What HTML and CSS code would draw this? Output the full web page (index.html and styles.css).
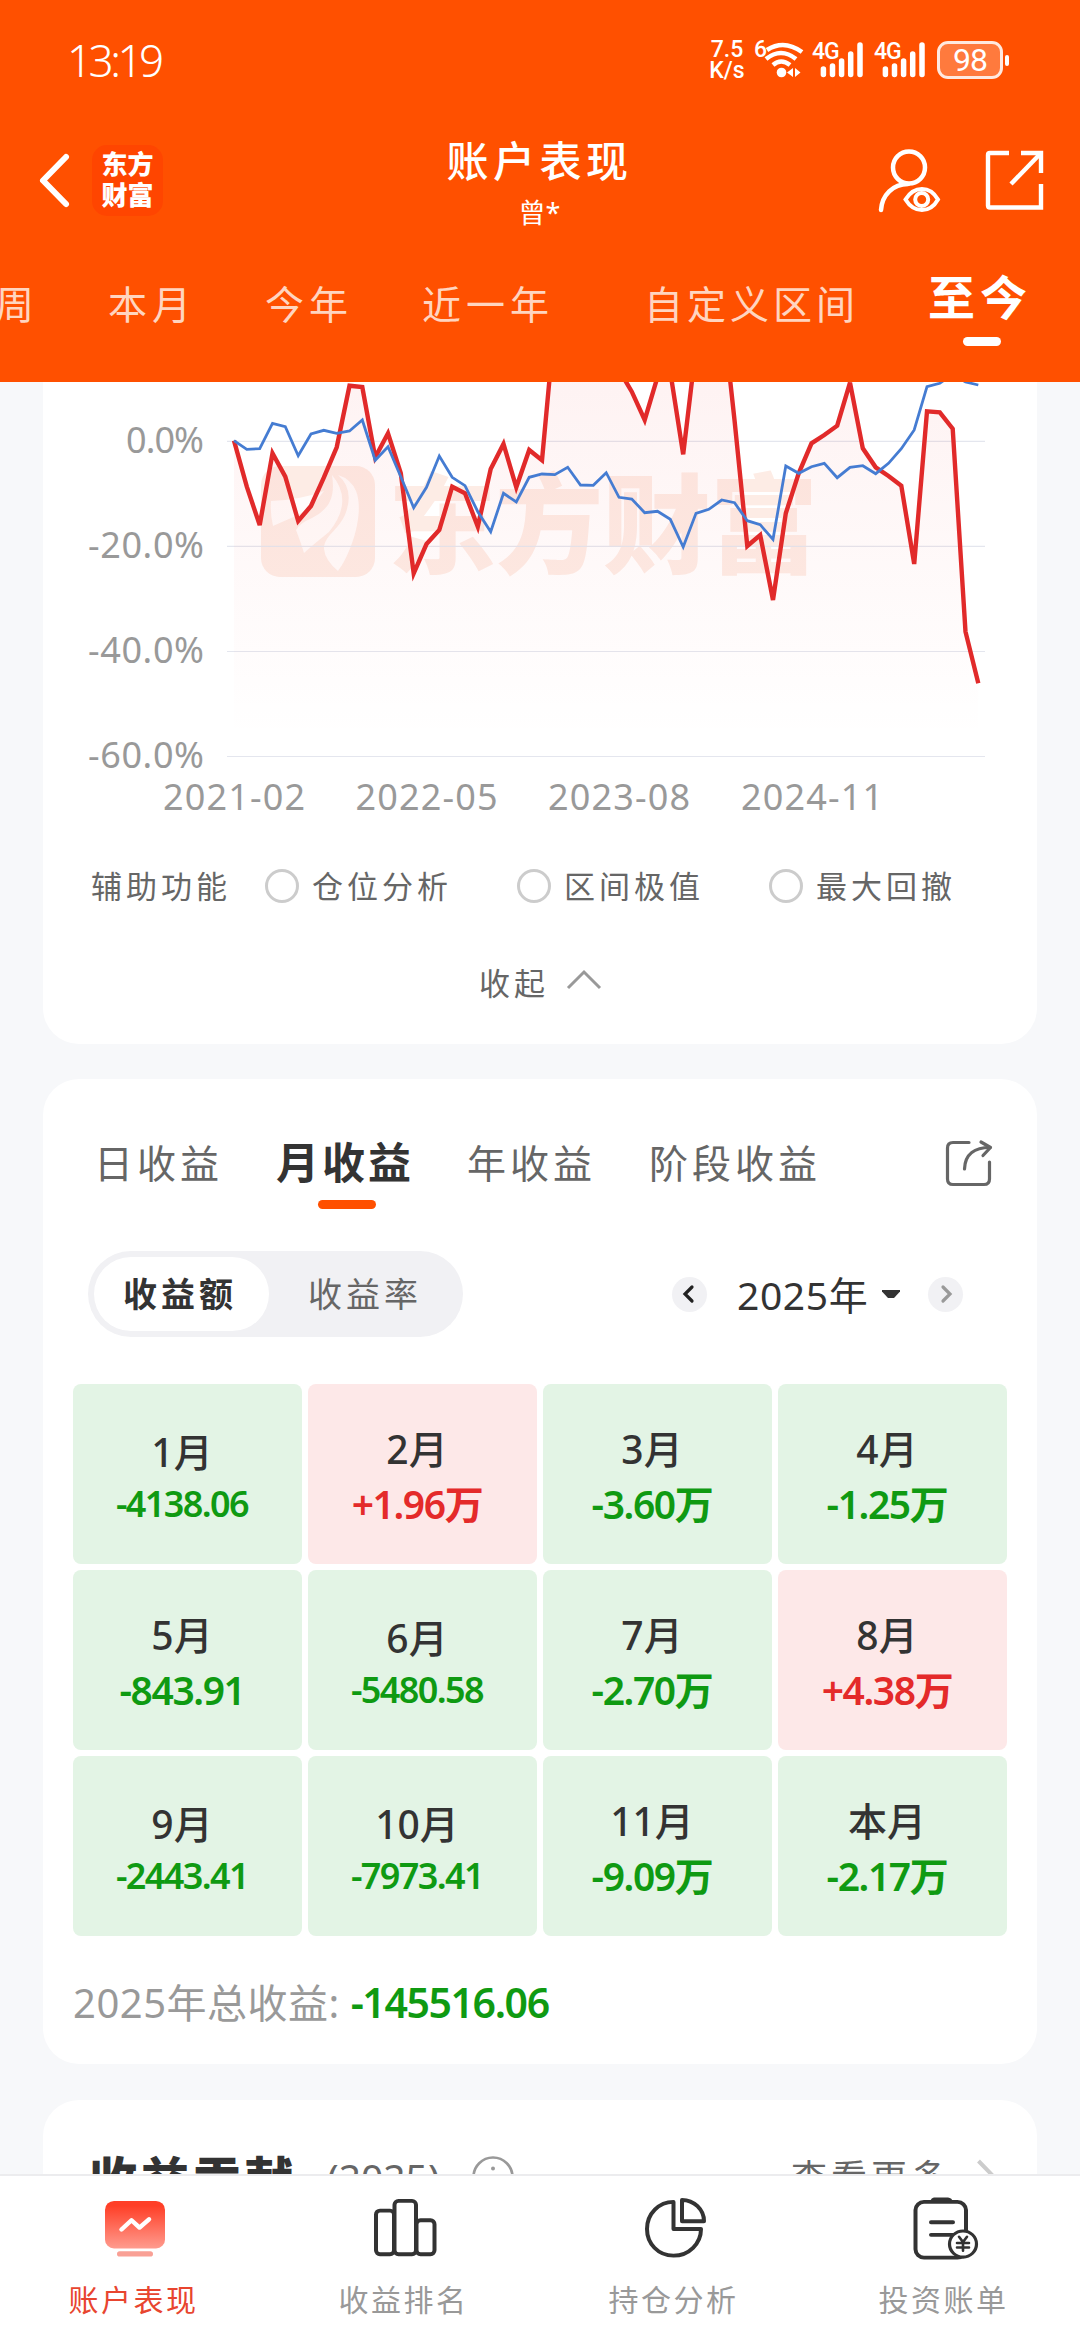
FILE: index.html
```html
<!DOCTYPE html>
<html lang="zh-CN">
<head>
  <meta charset="UTF-8" />
  <meta name="viewport" content="width=device-width, initial-scale=1.0" />
  <title>账户表现</title>
  <link rel="stylesheet" href="styles.css">
</head>
<body>

<header>
  <div class="status">
    <span class="time">13:19</span>
    <span class="speed"><span>7.5</span><span>K/s</span></span>
    <svg class="wifi" width="50" height="40" viewBox="753 42 50 40">
      <text x="753" y="59" class="net">6</text>
      <g fill="none" stroke="#fff" stroke-width="4.5">
        <path d="M766 52 Q783 41 801 54" />
        <path d="M765 61 Q780 49 795 61" />
        <path d="M772 67 Q780 60 789 67" />
      </g>
      <circle cx="780.500" cy="74.500" r="4.800" fill="#fff" />
      <path d="M786 74.500 L792 70 V79 Z M799.500 74.500 L794 70 V79 Z" fill="#fff" />
    </svg>
    <svg class="signal" width="54" height="40" viewBox="811 42 54 40">
      <text x="811" y="61" class="net">4G</text>
      <path d="M822.400 71 V76.500 M831.500 68 V76.500 M840.600 63 V76.500 M849.700 56 V76.500 M859 47 V76.500" stroke="#fff" stroke-width="5.500" stroke-linecap="round" />
    </svg>
    <svg class="signal" width="54" height="40" viewBox="811 42 54 40">
      <text x="811" y="61" class="net">4G</text>
      <path d="M822.400 71 V76.500 M831.500 68 V76.500 M840.600 63 V76.500 M849.700 56 V76.500 M859 47 V76.500" stroke="#fff" stroke-width="5.500" stroke-linecap="round" />
    </svg>
    <span class="battery">98</span>
    <span class="battery-tip"></span>
  </div>

  <div class="titlebar">
    <svg class="back" width="30" height="54" viewBox="0 0 30 54"><path d="M26 4 L3 27.500 L26 51" fill="none" stroke="#fff" stroke-width="6" stroke-linecap="round" stroke-linejoin="round" /></svg>
    <div class="brand">东方<br>财富</div>
    <div class="title">
      <h1>账户表现</h1>
      <p>曾*</p>
    </div>
    <svg class="user" width="64" height="66" viewBox="878 152 64 66" fill="none" stroke="#fff" stroke-width="4.500">
      <circle cx="909" cy="172.500" r="16" />
      <path d="M908 189 C893 189 882 200 881 215" stroke-linecap="round" />
      <path d="M905.500 204.500 C914 190.500 930 190.500 938 204.500 C930 218.500 914 218.500 905.500 204.500 Z" stroke-width="4" />
      <circle cx="921.700" cy="204.500" r="6.500" stroke-width="4" />
    </svg>
    <svg class="open" width="58" height="62" viewBox="986 155 58 62" fill="none" stroke="#fff" stroke-width="4.400">
      <path d="M1010 159 H991 Q989 159 989 161 V211.500 Q989 213.500 991 213.500 H1042 V190" />
      <path d="M1022 159 H1042 V179" />
      <path d="M1042 159 L1012 190" />
    </svg>
  </div>

  <nav class="ranges">
    <span>周</span>
    <span>本月</span>
    <span>今年</span>
    <span>近一年</span>
    <span class="custom">自定义区间</span>
    <span class="active">至今</span>
  </nav>
</header>

<main>
  <section class="card chart-card">
    <svg class="chart" width="994" height="450" viewBox="43 382 994 450">
      <defs>
        <linearGradient id="area" gradientUnits="userSpaceOnUse" x1="0" y1="300" x2="0" y2="740">
          <stop offset="0" stop-color="#f02828" stop-opacity="0.07" />
          <stop offset="1" stop-color="#f02828" stop-opacity="0" />
        </linearGradient>
      </defs>

      <!-- watermark -->
      <g fill="#fdece5">
        <rect x="261" y="466" width="114" height="111" rx="19" />
        <text class="watermark" x="388" y="565" textLength="430">东方财富</text>
      </g>
      <g fill="#fffcfb">
        <path d="M271 501 Q300 500 324 491 Q312 508 296 516 Q284 521 273 526 Q270 513 271 501 Z" />
        <path d="M332 475 C336 500 327 510 312 518 Q300 523 296 530 Q301 543 304 553 Q315 543 329 532 Q354 501 332 475 Z" />
        <path d="M338 475 Q353 488 347 509 C342 529 324 534 324 549 Q325 560 338 571 C351 554 365 513 356 491 Q351 479 338 475 Z" />
      </g>

      <g stroke="#e4e6ee" stroke-width="1.200">
        <path d="M227 441.400 H985 M227 546.400 H985 M227 651.500 H985 M227 756.500 H985" />
      </g>

      <path fill="url(#area)" d="M234 756 L234 440.700 L246.800 486.700 L259.700 525 L272.500 453.300 L285.300 476.700 L298.200 521 L311 506 L323.800 477.700 L336.700 447.300 L349.500 385.700 L362.300 387 L375.200 457.300 L388 433.300 L400.800 473.300 L413.700 573.300 L426.500 544 L439.300 530 L452.200 486.700 L465 493.300 L477.800 526.700 L490.700 469 L503.500 444 L516.300 487.300 L529.200 450 L542 460.300 L554.800 322 L606.200 330 L619 370 L631.800 391.700 L644.700 420 L657.500 377 L670.300 372 L683.200 454.300 L696 347 L721.700 303 L734.500 420 L747.300 546 L760.200 535 L773 600 L785.800 513.300 L798.700 473.300 L811.500 443.300 L824.300 435 L837.200 425.700 L850 382.700 L862.800 448.300 L875.700 467.300 L888.500 476 L901.300 485.700 L914.200 564 L927 411.300 L939.800 412.300 L952.700 428.700 L965.500 631.700 L978.300 683.300 L978.300 756 Z" />

      <polyline class="mine" points="234,440.700 246.800,486.700 259.700,525 272.500,453.300 285.300,476.700 298.200,521 311,506 323.800,477.700 336.700,447.300 349.500,385.700 362.300,387 375.200,457.300 388,433.300 400.800,473.300 413.700,573.300 426.500,544 439.300,530 452.200,486.700 465,493.300 477.800,526.700 490.700,469 503.500,444 516.300,487.300 529.200,450 542,460.300 554.800,322 567.700,300 606.200,330 619,370 631.800,391.700 644.700,420 657.500,377 670.300,372 683.200,454.300 696,347 708.800,310 721.700,303 734.500,420 747.300,546 760.200,535 773,600 785.800,513.300 798.700,473.300 811.500,443.300 824.300,435 837.200,425.700 850,382.700 862.800,448.300 875.700,467.300 888.500,476 901.300,485.700 914.200,564 927,411.300 939.800,412.300 952.700,428.700 965.500,631.700 978.300,683.300" />

      <polyline class="index" points="234,440.700 246.800,449.300 259.700,448.700 272.500,423.300 285.300,426.700 298.200,455.700 311,434 323.800,430.300 336.700,433.300 349.500,431 362.300,420 375.200,460.300 388,446.700 400.800,476.700 413.700,507.700 426.500,487.300 439.300,456 452.200,477.300 465,485.700 477.800,511.700 490.700,531.700 503.500,493.300 516.300,502 529.200,477.300 542,474 554.800,474.700 567.700,467.300 580.500,485 593.300,485.300 606.200,472.700 619,497.300 631.800,499 644.700,512.700 657.500,511.300 670.300,519.300 683.200,547 696,513.300 708.800,509.300 721.700,500 734.500,502.700 747.300,520.700 760.200,524.700 773,539.300 785.800,466 798.700,473.300 811.500,466.700 824.300,463.300 837.200,477.700 850,467.300 862.800,465.700 875.700,473.700 888.500,463.300 901.300,448.700 914.200,430 927,386.700 939.800,383.300 952.700,374 965.500,382 978.300,385" />

      <g class="axis">
        <text x="126" y="453" textLength="78">0.0%</text>
        <text x="88" y="558" textLength="116">-20.0%</text>
        <text x="88" y="663" textLength="116">-40.0%</text>
        <text x="88" y="768" textLength="116">-60.0%</text>
        <text x="163" y="810" textLength="142">2021-02</text>
        <text x="355.500" y="810" textLength="142">2022-05</text>
        <text x="548" y="810" textLength="142">2023-08</text>
        <text x="741" y="810" textLength="142">2024-11</text>
      </g>
    </svg>

    <div class="helpers">
      <span class="label">辅助功能</span>
      <span class="radio"><i></i>仓位分析</span>
      <span class="radio"><i></i>区间极值</span>
      <span class="radio"><i></i>最大回撤</span>
    </div>

    <div class="collapse">
      收起
      <svg width="36" height="22" viewBox="0 0 36 22"><path d="M2 19 L18 3 L34 19" fill="none" stroke="#999" stroke-width="3" /></svg>
    </div>
  </section>

  <section class="card profit-card">
    <div class="tabs">
      <span>日收益</span>
      <span class="active">月收益</span>
      <span>年收益</span>
      <span>阶段收益</span>
      <svg width="48" height="48" viewBox="945 1138 48 48" fill="none" stroke="#666" stroke-width="3.200" stroke-linecap="round" stroke-linejoin="round">
        <path d="M969 1141.500 H953 Q947.500 1141.500 947.500 1147 V1178 Q947.500 1183.500 953 1183.500 H984 Q989.500 1183.500 989.500 1178 V1161" />
        <path d="M964.500 1168 C965 1153 975 1146.500 990 1146.500" />
        <path d="M981 1141 L990.500 1146.500 L983 1154.500" />
      </svg>
    </div>

    <div class="filters">
      <div class="switch">
        <span class="on">收益额</span>
        <span>收益率</span>
      </div>
      <div class="year">
        <span class="arrow"><svg width="35" height="35" viewBox="0 0 35 35"><path d="M20 10 L13 17 L20 24" fill="none" stroke="#222" stroke-width="3.200" stroke-linecap="round" /></svg></span>
        <span class="year-text">2025年</span>
        <svg class="caret" width="18" height="8" viewBox="0 0 18 8"><path d="M0 0 H18 V1.500 L12 8 H6 L0 1.500 Z" fill="#333" /></svg>
        <span class="arrow"><svg width="35" height="35" viewBox="0 0 35 35"><path d="M15 10 L22 17 L15 24" fill="none" stroke="#999" stroke-width="3.200" stroke-linecap="round" /></svg></span>
      </div>
    </div>

    <div class="months">
      <div class="month small"><b>1月</b><em>-4138.06</em></div>
      <div class="month up"><b>2月</b><em>+1.96万</em></div>
      <div class="month"><b>3月</b><em>-3.60万</em></div>
      <div class="month"><b>4月</b><em>-1.25万</em></div>
      <div class="month"><b>5月</b><em>-843.91</em></div>
      <div class="month small"><b>6月</b><em>-5480.58</em></div>
      <div class="month"><b>7月</b><em>-2.70万</em></div>
      <div class="month up"><b>8月</b><em>+4.38万</em></div>
      <div class="month small"><b>9月</b><em>-2443.41</em></div>
      <div class="month small"><b>10月</b><em>-7973.41</em></div>
      <div class="month"><b>11月</b><em>-9.09万</em></div>
      <div class="month"><b>本月</b><em>-2.17万</em></div>
    </div>

    <p class="total">2025年总收益: <strong>-145516.06</strong></p>
  </section>

  <section class="card contribution">
    <h2>收益贡献</h2>
    <span class="sub">(2025)</span>
    <svg width="42" height="42" viewBox="0 0 42 42"><circle cx="21" cy="21" r="19.500" fill="none" stroke="#999" stroke-width="2.600" /><circle cx="21" cy="12.500" r="2" fill="#999" /><path d="M21 18 V31" stroke="#999" stroke-width="3" /></svg>
    <span class="more">查看更多</span>
    <svg class="chev" width="20" height="38" viewBox="0 0 20 38"><path d="M1.500 2 L18 19 L1.500 36" fill="none" stroke="#ccc" stroke-width="4" /></svg>
  </section>
</main>

<footer>
  <div class="item active">
    <svg width="64" height="62" viewBox="0 0 64 64" preserveAspectRatio="none">
      <defs>
        <linearGradient id="red" x1="0" y1="0" x2="0" y2="1">
          <stop offset="0.100" stop-color="#ff3f27" />
          <stop offset="1" stop-color="#ff9b8e" />
        </linearGradient>
      </defs>
      <rect x="2" y="3" width="60" height="49" rx="9" fill="url(#red)" />
      <rect x="14" y="55" width="36" height="5.500" rx="2.700" fill="#f9a095" />
      <path d="M18.500 32.500 L28.500 23 L36.500 30.500 L46 22" fill="none" stroke="#fff" stroke-width="4.500" stroke-linecap="round" stroke-linejoin="round" />
    </svg>
    <span>账户表现</span>
  </div>
  <div class="item">
    <svg width="64" height="62" viewBox="0 0 64 64" preserveAspectRatio="none" fill="none" stroke="#333" stroke-width="4">
      <rect x="3" y="13" width="18" height="45" rx="4" />
      <rect x="21.500" y="3" width="21.500" height="55" rx="4" />
      <rect x="43.500" y="23" width="18" height="35" rx="4" />
    </svg>
    <span>收益排名</span>
  </div>
  <div class="item">
    <svg width="64" height="62" viewBox="0 0 64 64" preserveAspectRatio="none" fill="none" stroke="#333" stroke-width="4" stroke-linejoin="round">
      <path d="M30.500 4 V32 H58 C58 47 46 59.500 30.500 59.500 C15 59.500 4 47 4 32 C4 16 16 4 30.500 4 Z" />
      <path d="M39 2 V24 H61 C61 12 51 2 39 2 Z" />
    </svg>
    <span>持仓分析</span>
  </div>
  <div class="item">
    <svg width="64" height="62" viewBox="0 0 64 64" preserveAspectRatio="none" fill="none" stroke="#333" stroke-width="4" stroke-linecap="round">
      <rect x="2.500" y="4" width="50.500" height="57.500" rx="8.500" />
      <path d="M17 4 Q18 0 21 -0.500 H35 Q39 0 40 4 Z" fill="#333" stroke="none" />
      <path d="M18 25 H40 M18 38 H40" />
      <circle cx="50" cy="47.500" r="13.500" fill="#fff" stroke-width="3.200" />
      <path d="M46 40 L50 45.500 L54 40 M50 45.500 V54.500 M44 46.500 H56 M44 51 H56" stroke-width="2.600" />
    </svg>
    <span>投资账单</span>
  </div>
</footer>

</body>
</html>
```
FILE: styles.css
```css
* {
  box-sizing: border-box;
}

body {
  margin: 0;
  width: 1080px;
  height: 2340px;
  overflow: hidden;
  display: flex;
  flex-direction: column;
  background: #f7f8fa;
  color: #333;
  font-family: "Noto Sans", "Noto Sans CJK SC", sans-serif;
  line-height: 1;
}

h1, h2, p {
  margin: 0;
}

svg {
  display: block;
  flex: none;
  overflow: visible;
}

/* header */
header {
  flex: none;
  height: 382px;
  background: #ff5000;
  color: #fff;
  overflow: hidden;
}

.status {
  height: 115px;
  padding: 40px 71px 35px 67px;
  display: flex;
  align-items: center;
}

.time {
  flex: 1;
  font-size: 44px;
  font-weight: 300;
  letter-spacing: -3.500px;
}

.speed {
  width: 38px;
  margin-right: 8px;
  display: flex;
  flex-direction: column;
  align-items: center;
  font: 500 23px/21px Roboto, sans-serif;
}

.net {
  font: 500 23px Roboto, sans-serif;
  letter-spacing: -1px;
  fill: #fff;
}

.wifi {
  margin-right: 8px;
}

.signal {
  margin-right: 8px;
}

.battery {
  width: 66px;
  height: 38px;
  margin-left: 1px;
  border: 3px solid #ffe9df;
  border-radius: 11px;
  background: #ff7a3d;
  font: 400 32px/33px Roboto, sans-serif;
  text-align: center;
  letter-spacing: -1px;
}

.battery-tip {
  width: 4px;
  height: 11px;
  margin-left: 2px;
  border-radius: 2px;
  background: #fff;
}

.titlebar {
  height: 130px;
  padding: 0 37px 0 40px;
  display: flex;
  align-items: center;
}

.brand {
  width: 71px;
  height: 71px;
  margin-left: 22px;
  padding-top: 4px;
  border-radius: 15px;
  background: #ff4500;
  font-size: 26px;
  font-weight: 900;
  line-height: 31px;
  text-align: center;
}

.title {
  flex: 1;
  padding: 6px 0 0 38px;
  text-align: center;
}

.title h1 {
  font-size: 42px;
  font-weight: 500;
  line-height: 46px;
  letter-spacing: 4.500px;
}

.title p {
  margin-top: 13px;
  font-size: 27px;
  line-height: 32px;
}

.user {
  margin-right: 43px;
}

.ranges {
  height: 130px;
  margin-left: -5px;
  padding-top: 39px;
  display: flex;
  gap: 69px;
  align-items: flex-start;
  font-size: 39px;
  line-height: 40px;
  letter-spacing: 5px;
  color: #ffd5c0;
  white-space: nowrap;
}

.ranges .custom {
  margin-left: 21px;
  letter-spacing: 4px;
}

.ranges .active {
  margin: -11px 0 0 0;
  font-size: 47px;
  font-weight: 700;
  line-height: 48px;
  color: #fff;
}

.ranges .active::after {
  content: "";
  display: block;
  width: 38px;
  height: 9px;
  margin: 16px 0 0 35px;
  border-radius: 5px;
  background: #fff;
}

/* content */
main {
  flex: 1;
  min-height: 0;
  padding: 0 43px;
  overflow: hidden;
}

.card {
  background: #fff;
  border-radius: 36px;
}

.chart-card {
  height: 662px;
  border-radius: 0 0 36px 36px;
}

.chart {
  overflow: hidden;
}

.watermark {
  font: 900 108px "Noto Sans CJK SC", sans-serif;
}

.mine {
  fill: none;
  stroke: #e12a2a;
  stroke-width: 4.400;
}

.index {
  fill: none;
  stroke: #457cd2;
  stroke-width: 2.800;
}

.axis {
  font-size: 36px;
  fill: #999;
}

.helpers {
  height: 108px;
  padding-left: 48px;
  display: flex;
  align-items: center;
  font-size: 31px;
  letter-spacing: 4px;
  color: #666;
}

.helpers .label {
  width: 174px;
}

.radio {
  width: 252px;
  display: flex;
  align-items: center;
}

.radio i {
  width: 34px;
  height: 34px;
  margin-right: 13px;
  border: 3px solid #ccc;
  border-radius: 50%;
}

.collapse {
  height: 86px;
  padding-left: 1px;
  display: flex;
  justify-content: center;
  align-items: center;
  gap: 17px;
  font-size: 31px;
  letter-spacing: 4px;
  color: #666;
}

.collapse svg {
  margin-top: -7px;
}

.profit-card {
  height: 985px;
  margin-top: 35px;
  padding: 0 30px;
}

.tabs {
  height: 172px;
  padding: 60px 14px 0 21px;
  display: flex;
  align-items: flex-start;
  font-size: 39px;
  line-height: 48px;
  letter-spacing: 4px;
  color: #666;
}

.tabs span {
  margin-right: 53px;
}

.tabs .active {
  font-size: 43px;
  font-weight: 700;
  letter-spacing: 3px;
  color: #333;
}

.tabs .active::after {
  content: "";
  display: block;
  width: 58px;
  height: 9px;
  margin: 13px 0 0 42px;
  border-radius: 5px;
  background: #ff5000;
}

.tabs svg {
  margin-left: auto;
}

.filters {
  padding: 0 44px 0 15px;
  display: flex;
  justify-content: space-between;
}

.switch {
  width: 375px;
  height: 86px;
  padding: 6px;
  display: flex;
  border-radius: 43px;
  background: #f1f1f4;
  font-size: 34px;
  line-height: 75px;
  letter-spacing: 4px;
  color: #666;
}

.switch span {
  width: 184px;
  text-align: center;
}

.switch .on {
  width: 175px;
  margin-right: 4px;
  padding-right: 3px;
  border-radius: 37px;
  background: #fff;
  color: #333;
  font-weight: 700;
}

.year {
  height: 86px;
  display: flex;
  align-items: center;
}

.arrow {
  width: 35px;
  height: 35px;
  border-radius: 50%;
  background: #f1f1f4;
}

.year-text {
  width: 145px;
  margin-left: 30px;
  font-size: 39px;
  letter-spacing: 0.600px;
  white-space: nowrap;
}

.caret {
  margin-right: 28px;
}

.months {
  margin-top: 47px;
  display: grid;
  grid-template-columns: repeat(4, 229px);
  grid-auto-rows: 180px;
  gap: 6px;
}

.month {
  padding: 44px 11px 0 0;
  display: flex;
  flex-direction: column;
  align-items: center;
  border-radius: 8px;
  background: #e3f4e5;
}

.month b {
  font-size: 39px;
  font-weight: 500;
  line-height: 42px;
}

.month em {
  margin-top: 13px;
  font-size: 39px;
  font-style: normal;
  font-weight: 600;
  line-height: 42px;
  letter-spacing: -1.400px;
  color: #0f9a12;
}

.month.small b {
  padding-top: 3px;
}

.month.small em {
  margin-top: 10px;
  font-size: 36px;
  letter-spacing: -1.600px;
}

.month.up {
  background: #fde8e8;
}

.month.up em {
  color: #e42a2a;
}

.total {
  margin-top: 41px;
  font-size: 40px;
  line-height: 50px;
  letter-spacing: 0.500px;
  color: #999;
}

.total strong {
  font-size: 41px;
  font-weight: 600;
  letter-spacing: -1.400px;
  color: #0f9a12;
}

.contribution {
  height: 300px;
  margin-top: 36px;
  padding: 54px 43px 0 46px;
  display: flex;
  align-items: flex-start;
}

.contribution h2 {
  width: 238px;
  font-size: 48px;
  font-weight: 900;
  line-height: 50px;
  letter-spacing: 4px;
}

.contribution .sub {
  width: 145px;
  padding-top: 1px;
  font-size: 39px;
  line-height: 44px;
  color: #666;
}

.contribution svg {
  margin-top: 2px;
}

.contribution .more {
  margin: 4px 26px 0 auto;
  font-size: 36px;
  line-height: 40px;
  letter-spacing: 4px;
  color: #666;
}

.contribution .chev {
  margin: 5px -3px 0 0;
}

/* bottom bar */
footer {
  flex: none;
  height: 166px;
  border-top: 2px solid #ececee;
  background: #fff;
  display: flex;
}

.item {
  flex: 1;
  padding-top: 22px;
  display: flex;
  flex-direction: column;
  align-items: center;
}

.item span {
  margin-top: 23px;
  padding-right: 3px;
  font-size: 30px;
  line-height: 34px;
  letter-spacing: 2.500px;
  color: #999;
}

.item.active span {
  color: #e8452f;
}
```
